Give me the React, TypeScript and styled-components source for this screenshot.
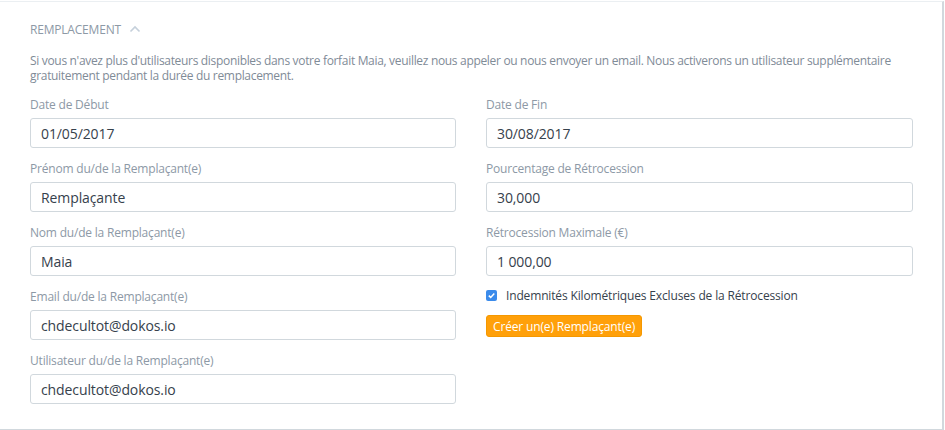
import React from "react";
import styled, { createGlobalStyle } from "styled-components";

const Global = createGlobalStyle`
  html, body { margin: 0; padding: 0; background: #fff; }
  body { font-family: "Open Sans", "Noto Sans", sans-serif; -webkit-font-smoothing: antialiased; }
  * { box-sizing: border-box; }
`;

const Panel = styled.section`
  width: 944px;
  height: 429px;
  border-top: 1px solid #ebeff2;
  border-right: 2px solid #d1d8dd;
  border-bottom: 1px solid #d1d8dd;
  background: #fff;
  padding: 19px 30px 0 30px;
  margin-top: 1px;
`;

const Heading = styled.div`
  display: flex;
  align-items: center;
  gap: 8px;
  height: 16px;
  font-size: 12px;
  color: #8d99a6;
  letter-spacing: -0.2px;
  text-transform: uppercase;
`;

const Description = styled.p`
  margin: 16px 0 0 0;
  font-size: 12px;
  line-height: 15px;
  color: #7f8b97;
  letter-spacing: -0.32px;
  max-width: 890px;
`;

const Columns = styled.div`
  display: grid;
  grid-template-columns: 426px 427px;
  column-gap: 30px;
  margin-top: 14px;
`;

const Column = styled.div`
  display: flex;
  flex-direction: column;
`;

const Field = styled.div`
  display: flex;
  flex-direction: column;
  height: 64px;
`;

const Label = styled.label`
  font-size: 12px;
  line-height: 15px;
  color: #8d99a6;
  letter-spacing: -0.2px;
  height: 21px;
`;

const Input = styled.div`
  height: 30px;
  border: 1px solid #d1d8dd;
  border-radius: 3px;
  padding: 0 10px;
  display: flex;
  align-items: center;
  font-size: 14px;
  color: #36414c;
  letter-spacing: -0.1px;
`;

const CheckRow = styled.label`
  display: flex;
  align-items: center;
  gap: 9px;
  font-size: 12px;
  color: #36414c;
  height: 18px;
  margin-top: -3px;
  letter-spacing: -0.15px;
`;

const Box = styled.span`
  width: 11px;
  height: 11px;
  border-radius: 2px;
  background: #3b8beb;
  display: flex;
  align-items: center;
  justify-content: center;
`;

const Button = styled.button`
  align-self: flex-start;
  margin-top: 11px;
  height: 22px;
  padding: 0 6px;
  border: 1px solid #f59800;
  border-radius: 3px;
  background: #ffa00a;
  color: #fff;
  font-family: inherit;
  font-size: 12px;
  letter-spacing: -0.15px;
`;

type F = { label: string; value: string };

const left: F[] = [
  { label: "Date de Début", value: "01/05/2017" },
  { label: "Prénom du/de la Remplaçant(e)", value: "Remplaçante" },
  { label: "Nom du/de la Remplaçant(e)", value: "Maia" },
  { label: "Email du/de la Remplaçant(e)", value: "chdecultot@dokos.io" },
  { label: "Utilisateur du/de la Remplaçant(e)", value: "chdecultot@dokos.io" },
];

const right: F[] = [
  { label: "Date de Fin", value: "30/08/2017" },
  { label: "Pourcentage de Rétrocession", value: "30,000" },
  { label: "Rétrocession Maximale (€)", value: "1 000,00" },
];

const FieldView = ({ label, value }: F) => (
  <Field>
    <Label>{label}</Label>
    <Input>{value}</Input>
  </Field>
);

export default function App() {
  return (
    <>
      <Global />
      <Panel>
        <Heading>
          Remplacement
          <svg width="12" height="8" viewBox="0 0 12 8">
            <path d="M1.5 6.5 L6 2 L10.5 6.5" fill="none" stroke="#c5d0db" strokeWidth="1.6" />
          </svg>
        </Heading>
        <Description>
          Si vous n'avez plus d'utilisateurs disponibles dans votre forfait Maia, veuillez nous appeler ou nous envoyer un email. Nous activerons un utilisateur supplémentaire gratuitement pendant la durée du remplacement.
        </Description>
        <Columns>
          <Column>
            {left.map((f) => (
              <FieldView key={f.label} {...f} />
            ))}
          </Column>
          <Column>
            {right.map((f) => (
              <FieldView key={f.label} {...f} />
            ))}
            <CheckRow>
              <Box>
                <svg width="9" height="9" viewBox="0 0 9 9">
                  <path d="M1.8 4.6 L3.7 6.4 L7.3 2.6" fill="none" stroke="#fff" strokeWidth="1.5" />
                </svg>
              </Box>
              Indemnités Kilométriques Excluses de la Rétrocession
            </CheckRow>
            <Button>Créer un(e) Remplaçant(e)</Button>
          </Column>
        </Columns>
      </Panel>
    </>
  );
}
